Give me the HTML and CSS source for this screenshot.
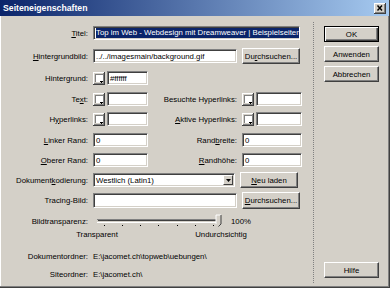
FILE: index.html
```html
<!DOCTYPE html>
<html lang="de">
<head>
    <meta charset="UTF-8">
    <title>Seiteneigenschaften</title>
    <link rel="stylesheet" href="styles.css">
</head>
<body>

<div class="dialog">
    <div class="titlebar">
        <span class="caption">Seiteneigenschaften</span>
        <span class="close">
            <svg width="12" height="11" viewBox="0 0 12 11">
                <rect x="0" y="0" width="12" height="11" fill="#d4d0c8"/>
                <rect x="0" y="0" width="11" height="1" fill="#fff"/>
                <rect x="0" y="0" width="1" height="10" fill="#fff"/>
                <rect x="0" y="10" width="12" height="1" fill="#404040"/>
                <rect x="11" y="0" width="1" height="11" fill="#404040"/>
                <rect x="1" y="9" width="10" height="1" fill="#808080"/>
                <rect x="10" y="1" width="1" height="9" fill="#808080"/>
                <path d="M3.5 2.5L8 7.5M8 2.5L3.5 7.5" stroke="#000" stroke-width="1.4"/>
            </svg>
        </span>
    </div>

    <div class="content">
        <div class="main">
            <!-- Titel -->
            <div class="row first">
                <span class="lbl"><u>T</u>itel:</span>
                <div class="field w-title"><span class="sel">Top im Web - Webdesign mit Dreamweaver | Beispielseiten</span></div>
            </div>

            <!-- Hintergrundbild -->
            <div class="row mt3">
                <span class="lbl"><u>H</u>intergrundbild:</span>
                <div class="field w-long">../../imagesmain/background.gif</div>
                <div class="btn w-btn">Du<u>r</u>chsuchen...</div>
            </div>

            <!-- Farben -->
            <div class="row mt2">
                <span class="lbl">Hintergrund:</span>
                <svg class="swatch" width="12" height="13" viewBox="0 0 12 13"><use href="#sw"/></svg>
                <div class="field w-color">#ffffff</div>
            </div>

            <div class="row mt1">
                <span class="lbl">Te<u>x</u>t:</span>
                <svg class="swatch" width="12" height="13" viewBox="0 0 12 13"><use href="#sw"/></svg>
                <div class="field w-color"></div>
                <span class="lbl2">Besuchte Hyperlinks:</span>
                <svg class="swatch" width="12" height="13" viewBox="0 0 12 13"><use href="#sw"/></svg>
                <div class="field w-color2"></div>
            </div>

            <div class="row">
                <span class="lbl">H<u>y</u>perlinks:</span>
                <svg class="swatch" width="12" height="13" viewBox="0 0 12 13"><use href="#sw"/></svg>
                <div class="field w-color"></div>
                <span class="lbl2"><u>A</u>ktive Hyperlinks:</span>
                <svg class="swatch" width="12" height="13" viewBox="0 0 12 13"><use href="#sw"/></svg>
                <div class="field w-color2"></div>
            </div>

            <!-- Raender -->
            <div class="row mt1">
                <span class="lbl"><u>L</u>inker Rand:</span>
                <div class="field w-short">0</div>
                <span class="lbl2">Rand<u>b</u>reite:</span>
                <div class="field w-short2">0</div>
            </div>

            <div class="row">
                <span class="lbl"><u>O</u>berer Rand:</span>
                <div class="field w-short">0</div>
                <span class="lbl2"><u>R</u>andhöhe:</span>
                <div class="field w-short2">0</div>
            </div>

            <!-- Kodierung -->
            <div class="row">
                <span class="lbl">Dokument<u>k</u>odierung:</span>
                <div class="field select">
                    <span class="select-text">Westlich (Latin1)</span>
                    <span class="drop">
                        <svg width="5" height="3" viewBox="0 0 5 3"><path d="M0 0H5L2.5 3Z" fill="#000"/></svg>
                    </span>
                </div>
                <div class="btn w-btn"><u>N</u>eu laden</div>
            </div>

            <div class="row">
                <span class="lbl">Tracing-Bild:</span>
                <div class="field w-long tall"></div>
                <div class="btn w-btn tall"><u>D</u>urchsuchen...</div>
            </div>

            <!-- Bildtransparenz -->
            <div class="row slider-row">
                <span class="lbl">Bildtransparenz:</span>
                <svg class="slider" width="125" height="16" viewBox="0 0 125 16">
                    <rect x="0" y="6" width="124" height="1" fill="#808080"/>
                    <rect x="1" y="7" width="122" height="1" fill="#404040"/>
                    <rect x="0" y="9" width="124" height="1" fill="#fff"/>
                    <rect x="123" y="6" width="1" height="4" fill="#fff"/>
                    <g fill="#000">
                        <rect x="7" y="12" width="1" height="1"/>
                        <rect x="25" y="12" width="1" height="1"/>
                        <rect x="43" y="12" width="1" height="1"/>
                        <rect x="61" y="12" width="1" height="1"/>
                        <rect x="80" y="12" width="1" height="1"/>
                        <rect x="98" y="12" width="1" height="1"/>
                        <rect x="116" y="12" width="1" height="1"/>
                    </g>
                    <path d="M119 2H124V11L121.5 13.5L119 11Z" fill="#d4d0c8"/>
                    <path d="M119 11V2H124" fill="none" stroke="#fff"/>
                    <path d="M124 2V11L121.5 13.5" fill="none" stroke="#404040"/>
                </svg>
                <span class="pct">100%</span>
            </div>

            <div class="scale-row">
                <span class="scale-min">Transparent</span>
                <span class="scale-max">Undurchsichtig</span>
            </div>

            <!-- Ordner -->
            <div class="info first-info">
                <span class="lbl">Dokumentordner:</span>
                <span>E:\jacomet.ch\topweb\uebungen\</span>
            </div>
            <div class="info">
                <span class="lbl">Siteordner:</span>
                <span>E:\jacomet.ch\</span>
            </div>
        </div>

        <div class="sep"></div>

        <div class="side">
            <div class="btn default">OK</div>
            <div class="btn">Anwenden</div>
            <div class="btn">Abbrechen</div>
            <div class="btn help">Hilfe</div>
        </div>
    </div>
</div>

<svg width="0" height="0" class="defs">
    <defs>
        <g id="sw">
            <rect x="0" y="0" width="12" height="13" fill="#d4d0c8"/>
            <rect x="0" y="0" width="11" height="1" fill="#fff"/>
            <rect x="0" y="0" width="1" height="12" fill="#fff"/>
            <rect x="0" y="12" width="12" height="1" fill="#404040"/>
            <rect x="11" y="0" width="1" height="13" fill="#404040"/>
            <rect x="1" y="11" width="10" height="1" fill="#808080"/>
            <rect x="10" y="1" width="1" height="10" fill="#808080"/>
            <rect x="2" y="2" width="8" height="8" fill="#fff"/>
            <rect x="2" y="2" width="8" height="1" fill="#808080"/>
            <rect x="2" y="2" width="1" height="8" fill="#808080"/>
            <rect x="7" y="9" width="3" height="1" fill="#000"/>
            <rect x="8" y="10" width="1" height="1" fill="#000"/>
        </g>
    </defs>
</svg>

</body>
</html>
```

FILE: styles.css
```css
body {
    margin: 0;
    padding: 0;
    background-color: #d4d0c8;
    font-family: "Liberation Sans", Arial, sans-serif;
    font-size: 7.8px;
    color: #000;
}
u {
    text-decoration-thickness: 1px;
    text-underline-offset: 1px;
}
.defs {
    display: block;
    width: 0;
    height: 0;
    overflow: hidden;
}
.dialog {
    width: 390px;
    height: 288px;
    box-sizing: border-box;
    background: #d4d0c8;
    border-right: 1px solid #404040;
    border-bottom: 1px solid #404040;
    box-shadow: inset -1px -1px 0 #808080, inset 1px 0 0 #fff;
    display: flex;
    flex-direction: column;
}
.titlebar {
    height: 16px;
    flex: none;
    background: linear-gradient(to right, #0a246a, #a6caf0);
    display: flex;
    align-items: center;
    justify-content: space-between;
    padding: 0 3px 0 3px;
}
.caption {
    color: #fff;
    font-weight: bold;
    font-size: 8.7px;
}
.close svg {
    display: block;
}
.content {
    flex: 1;
    display: flex;
}
.main {
    width: 313px;
    flex: none;
    padding-top: 7px;
}
.row {
    height: 20px;
    display: flex;
    align-items: center;
}
.mt1 { margin-top: 1px; }
.mt2 { margin-top: 2px; }
.mt3 { margin-top: 3px; }
.lbl {
    width: 88px;
    flex: none;
    text-align: right;
    margin-right: 5px;
    white-space: nowrap;
}
.lbl2 {
    width: 89px;
    flex: none;
    text-align: right;
    margin-right: 5px;
    white-space: nowrap;
}
.field {
    height: 14px;
    box-sizing: border-box;
    background: #fff;
    border: 1px solid;
    border-color: #808080 #fff #fff #808080;
    box-shadow: inset 1px 1px 0 #404040, inset -1px -1px 0 #d4d0c8;
    padding: 0 2px;
    display: flex;
    align-items: center;
    overflow: hidden;
    white-space: nowrap;
    flex: none;
}
.field.tall {
    height: 15px;
}
.w-title { width: 207px; }
.w-long { width: 144px; }
.w-color { width: 41px; }
.w-color2 { width: 46px; }
.w-short { width: 55px; }
.w-short2 { width: 60px; }
.sel {
    background: #0a246a;
    color: #fff;
    line-height: 10px;
}
.swatch {
    display: block;
    flex: none;
    margin-right: 2px;
}
.select {
    width: 142px;
    padding-right: 1px;
    justify-content: space-between;
}
.drop {
    width: 10px;
    height: 10px;
    box-sizing: border-box;
    background: #d4d0c8;
    border: 1px solid;
    border-color: #fff #404040 #404040 #fff;
    display: flex;
    align-items: center;
    justify-content: center;
}
.drop svg {
    display: block;
}
.btn {
    height: 16px;
    box-sizing: border-box;
    background: #d4d0c8;
    border: 1px solid;
    border-color: #fff #404040 #404040 #fff;
    box-shadow: inset -1px -1px 0 #808080;
    display: flex;
    align-items: center;
    justify-content: center;
    white-space: nowrap;
    flex: none;
}
.btn.tall {
    height: 17px;
}
.w-btn {
    width: 58px;
    margin-left: 5px;
}
.slider-row {
    height: 16px;
    margin-top: 3px;
}
.slider {
    display: block;
    margin-left: 4px;
}
.pct {
    margin-left: 9px;
}
.scale-row {
    height: 10px;
    display: flex;
    align-items: center;
}
.scale-min {
    width: 60px;
    margin-left: 67px;
    text-align: center;
}
.scale-max {
    width: 70px;
    margin-left: 59px;
    text-align: center;
}
.info {
    height: 18px;
    display: flex;
    align-items: center;
    white-space: nowrap;
}
.first-info {
    margin-top: 8px;
}
.sep {
    width: 0;
    border-left: 1px dotted #808080;
    margin: 6px 0 4px;
}
.side {
    width: 55px;
    margin-left: 10px;
    padding: 10px 0 9px;
    display: flex;
    flex-direction: column;
    gap: 4px;
}
.btn.default {
    border-color: #000;
    box-shadow: inset 1px 1px 0 #fff, inset -1px -1px 0 #404040, inset -2px -2px 0 #808080;
}
.btn.help {
    margin-top: auto;
}
```
